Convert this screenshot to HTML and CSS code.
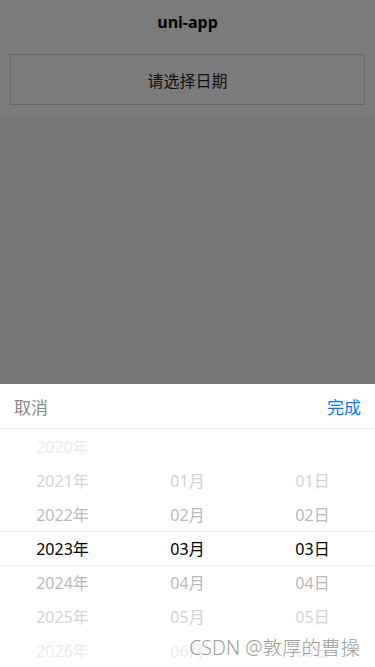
FILE: index.html
```html
<!DOCTYPE html>
<html lang="zh">
<head>
<meta charset="utf-8">
<title>uni-app</title>
<link rel="stylesheet" href="styles.css">
</head>
<body>
<div class="page">
  <div class="top">
    <div class="nav">uni-app</div>
    <div class="btn-wrap"><div class="btn">请选择日期</div></div>
  </div>
  <div class="content"></div>
</div>
<div class="mask"></div>
<div class="sheet">
  <div class="sheet-head">
    <span class="cancel">取消</span>
    <span class="done">完成</span>
  </div>
  <div class="picker">
    <div class="col">
      <div class="row r0">2020年</div>
      <div class="row r1">2021年</div>
      <div class="row r2">2022年</div>
      <div class="row sel">2023年</div>
      <div class="row r2">2024年</div>
      <div class="row r1">2025年</div>
      <div class="row r0">2026年</div>
    </div>
    <div class="col">
      <div class="row r0"></div>
      <div class="row r1">01月</div>
      <div class="row r2">02月</div>
      <div class="row sel">03月</div>
      <div class="row r2">04月</div>
      <div class="row r1">05月</div>
      <div class="row r0">06月</div>
    </div>
    <div class="col">
      <div class="row r0"></div>
      <div class="row r1">01日</div>
      <div class="row r2">02日</div>
      <div class="row sel">03日</div>
      <div class="row r2">04日</div>
      <div class="row r1">05日</div>
      <div class="row r0">06日</div>
    </div>
    <div class="indicator"></div>
  </div>
  <div class="watermark">CSDN @敦厚的曹操</div>
</div>
</body>
</html>
```
FILE: styles.css
```css
html, body {
  margin: 0;
  padding: 0;
  width: 375px;
  height: 667px;
  overflow: hidden;
  font-family: "Noto Sans", "Noto Sans CJK SC", sans-serif;
}
.page {
  display: flex;
  flex-direction: column;
  height: 667px;
  background: #eeeeee;
}
.top {
  background: #f7f7f7;
}
.nav {
  height: 44px;
  display: flex;
  align-items: center;
  justify-content: center;
  font-size: 16px;
  font-weight: bold;
  color: #000;
}
.btn-wrap {
  padding: 10px;
}
.btn {
  height: 49px;
  border: 1px solid #cccccc;
  display: flex;
  align-items: center;
  justify-content: center;
  font-size: 16px;
  color: #222;
}
.content {
  flex: 1;
}
.mask {
  position: fixed;
  left: 0;
  top: 0;
  width: 375px;
  height: 667px;
  background: rgba(0, 0, 0, 0.5);
}
.sheet {
  position: fixed;
  left: 0;
  bottom: 0;
  width: 375px;
  height: 283px;
  background: #fff;
  display: flex;
  flex-direction: column;
}
.sheet-head {
  height: 44px;
  border-bottom: 1px solid #eeeeee;
  display: flex;
  align-items: center;
  justify-content: space-between;
  padding: 0 14px;
  font-size: 17px;
}
.cancel { color: #888888; }
.done { color: #007aff; }
.picker {
  position: relative;
  flex: 1;
  display: grid;
  grid-template-columns: 1fr 1fr 1fr;
}
.col {
  display: flex;
  flex-direction: column;
}
.row {
  height: 34px;
  display: flex;
  align-items: center;
  justify-content: center;
  font-size: 16px;
}
.r0 { color: #ececec; }
.r1 { color: #d2d2d2; }
.r2 { color: #b9b9b9; }
.sel { color: #000; }
.indicator {
  position: absolute;
  left: 0;
  right: 0;
  top: 102px;
  height: 33px;
  border-top: 1px solid #eeeeee;
  border-bottom: 1px solid #eeeeee;
  pointer-events: none;
}
.watermark {
  position: absolute;
  right: 15px;
  bottom: 6px;
  font-size: 19.5px;
  font-weight: 300;
  color: rgba(135, 135, 135, 0.85);
  text-shadow: 0 0 2px #fff;
}
```
